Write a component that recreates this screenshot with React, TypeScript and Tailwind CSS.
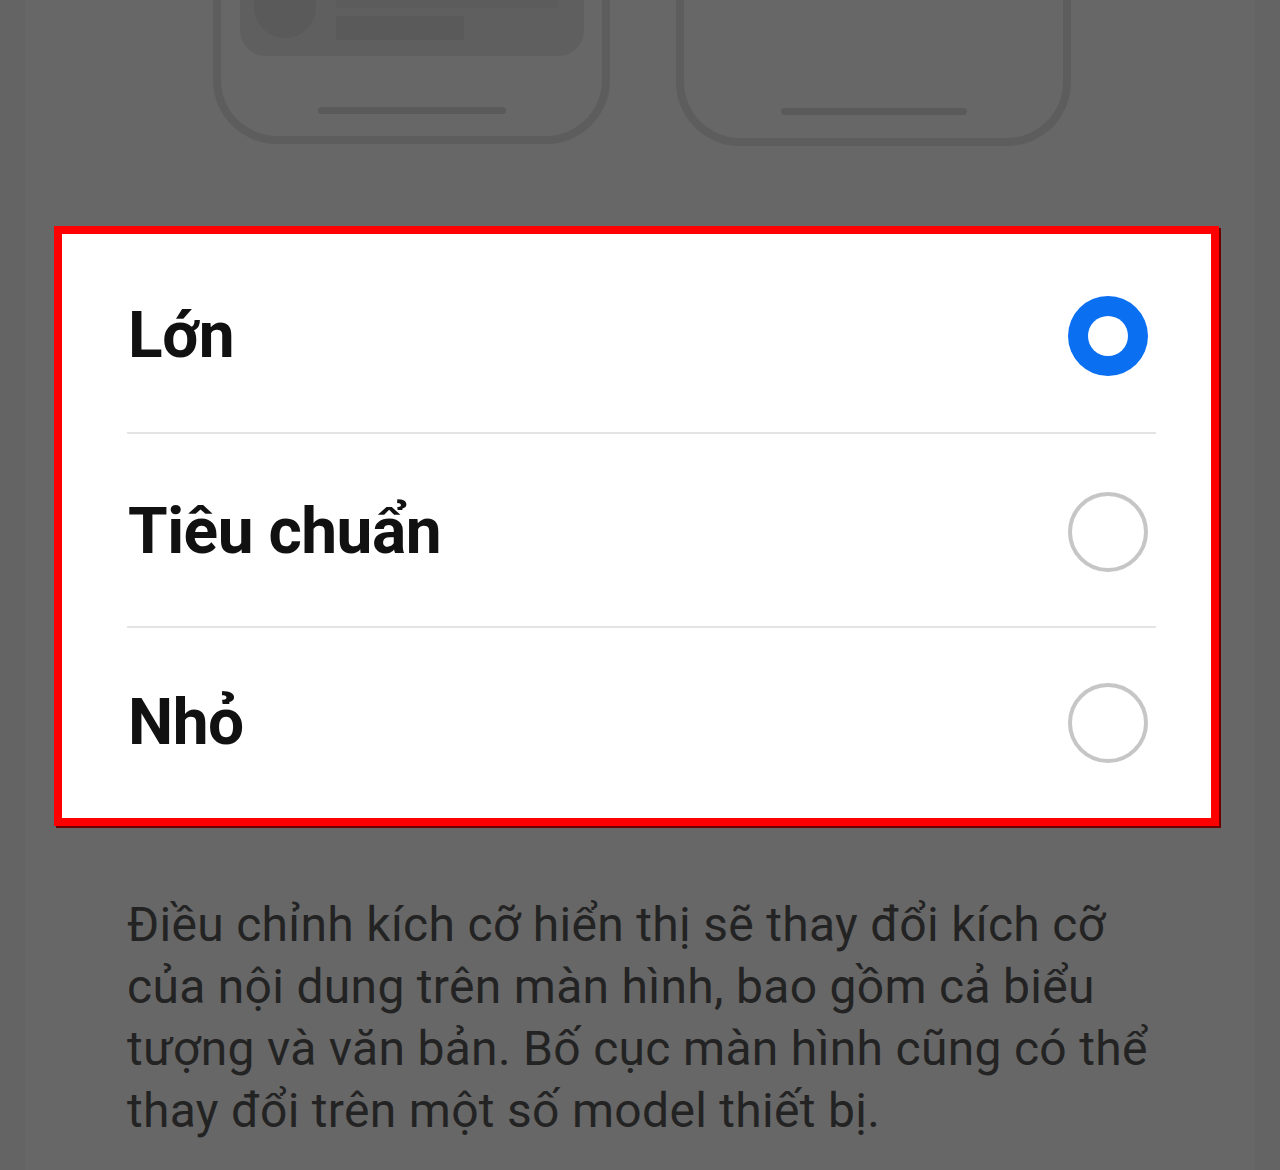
import React from 'react'

const FONT = { fontFamily: 'Roboto, "Noto Sans", "Liberation Sans", sans-serif' }

type Option = { label: string; selected: boolean; row: string }

const OPTIONS: Option[] = [
  { label: 'Lớn', selected: true, row: 'h-[198px] pt-[6px]' },
  { label: 'Tiêu chuẩn', selected: false, row: 'h-[193px] pt-[3px]' },
  { label: 'Nhỏ', selected: false, row: 'h-[190px]' },
]

const HINT = [
  'Điều chỉnh kích cỡ hiển thị sẽ thay đổi kích cỡ',
  'của nội dung trên màn hình, bao gồm cả biểu',
  'tượng và văn bản. Bố cục màn hình cũng có thể',
  'thay đổi trên một số model thiết bị.',
]

function Radio({ selected }: { selected: boolean }) {
  if (selected) {
    return (
      <div className="w-[80px] h-[80px] rounded-full bg-[#0b6ff2] flex items-center justify-center">
        <div className="w-[40px] h-[40px] rounded-full bg-white" />
      </div>
    )
  }
  return <div className="w-[80px] h-[80px] rounded-full border-[4px] border-[#c6c6c6]" />
}

function LeftPhone() {
  return (
    <div className="w-[397px] h-[144px] rounded-b-[64px] border-[8px] border-t-0 border-[#5d5d5d] flex flex-col items-center">
      <div className="w-[344px] h-[56px] rounded-b-[26px] bg-[#5f5f5f] flex items-start gap-[20px] pl-[14px]">
        <div className="w-[62px] h-[38px] rounded-b-[31px] bg-[#5a5a5a]" />
        <div className="flex flex-col gap-[8px]">
          <div className="w-[222px] h-[8px] bg-[#5c5c5c]" />
          <div className="w-[128px] h-[24px] bg-[#5a5a5a]" />
        </div>
      </div>
      <div className="flex-1" />
      <div className="w-[188px] h-[7px] rounded-full bg-[#5a5a5a] mb-[22px]" />
    </div>
  )
}

function RightPhone() {
  return (
    <div className="w-[395px] h-[146px] rounded-b-[64px] border-[8px] border-t-0 border-[#5d5d5d] flex flex-col items-center">
      <div className="flex-1" />
      <div className="w-[186px] h-[7px] rounded-full bg-[#5a5a5a] mb-[23px]" />
    </div>
  )
}

export default function App() {
  return (
    <div className="w-[1280px] h-[1170px] bg-[#646464] overflow-hidden" style={FONT}>
      <div className="mx-[25px] h-full bg-[#676767] flex flex-col">
        <div className="h-[226px] flex gap-[66px] pl-[188px]">
          <LeftPhone />
          <RightPhone />
        </div>

        <div className="ml-[29px] w-[1165px] h-[600px] border-[8px] border-[#ff0000] shadow-[2px_2px_0_#6e0000] bg-white flex flex-col">
          {OPTIONS.map((opt, i) => (
            <React.Fragment key={opt.label}>
              {i > 0 && <div className="ml-[65px] mr-[55px] h-[2px] bg-[#e4e4e4]" />}
              <div className={`${opt.row} flex items-center justify-between pl-[66px] pr-[63px]`}>
                <span className="text-[64px] font-bold text-[#111] leading-none tracking-[-0.5px]">{opt.label}</span>
                <Radio selected={opt.selected} />
              </div>
            </React.Fragment>
          ))}
        </div>

        <p className="mt-[68px] pl-[102px] text-[48px] leading-[62px] tracking-[0.3px] text-[#232323] whitespace-nowrap">
          {HINT.map((line) => (
            <span key={line} className="block">{line}</span>
          ))}
        </p>
      </div>
    </div>
  )
}
